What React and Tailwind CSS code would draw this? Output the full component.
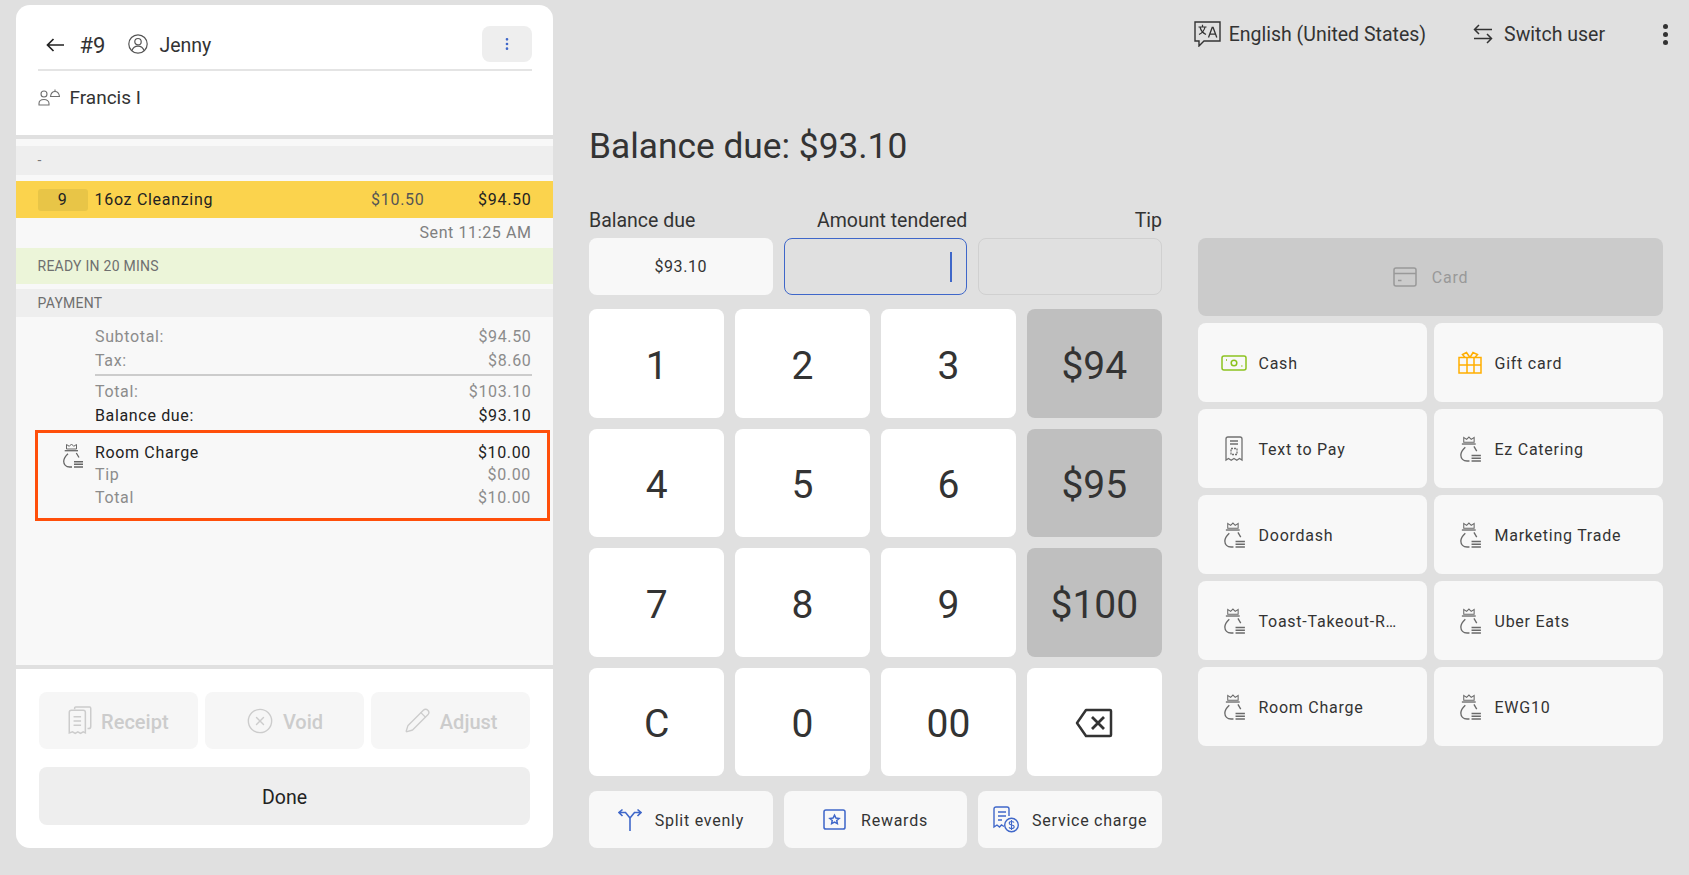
import { Pencil, CircleX, EllipsisVertical } from "lucide-react";

function BagIcon({ className = "" }) {
  return (
    <svg viewBox="0 0 20 25" className={className} fill="none" stroke="currentColor" strokeWidth="1.3">
      <path d="M3.500 6V1.500l2.800 1.800L8.500 1l2.200 2.300 2.800-1.800V6z" strokeWidth="1" />
      <path d="M1.700 7.700H15" />
      <path d="M13.300 10 16 14.500" />
      <path d="M5 10.700C2.500 13 .7 15.500.7 18.300.7 21.500 3 24 6.700 24H9" />
      <path d="M11 18.800h9M11 21.300h9M11 24h9" strokeWidth="1.400" />
    </svg>
  );
}

function CashIcon() {
  return (
    <svg viewBox="0 0 26 16" className="w-[26px] h-[16px] text-[#8cc21f]" fill="none" stroke="currentColor" strokeWidth="1.5">
      <rect x="1" y="1" width="24" height="14" rx="2" />
      <circle cx="13" cy="8" r="2.800" />
      <path d="M5 5h.8M20.500 11h.8" strokeWidth="1.800" />
    </svg>
  );
}

function GiftIcon() {
  return (
    <svg viewBox="0 0 24 23" className="w-[24px] h-[23px] text-[#ffae00]" fill="none" stroke="currentColor" strokeWidth="1.5">
      <rect x="1" y="6.500" width="22" height="15.500" />
      <path d="M1 14h22M9 6.500V22M16 6.500V22" />
      <path d="M12 6.500 8.500 1.500 4.500 3.500 7 6.500M12 6.500l3-5 4.500 2L17 6.500" />
    </svg>
  );
}

function TextPayIcon() {
  return (
    <svg viewBox="0 0 18 26" className="w-[18px] h-[26px] text-[#707070]" fill="none" stroke="currentColor" strokeWidth="1.300">
      <path d="M1 3a2 2 0 0 1 2-2h12a2 2 0 0 1 2 2v21l-2.500-1.500-2.700 1.800-2.800-1.800-2.800 1.800-2.700-1.800L1 24z" />
      <path d="M5 5h8M5 8h8" />
      <rect x="6" y="12.500" width="6" height="6" strokeDasharray="2 1" />
    </svg>
  );
}

function CardIcon() {
  return (
    <svg viewBox="0 0 24 20" className="w-[24px] h-[20px]" fill="none" stroke="currentColor" strokeWidth="1.500">
      <rect x="1" y="1" width="22" height="18" rx="2" />
      <path d="M1 6.500h22M5 13.500h3.500" />
    </svg>
  );
}

function SplitIcon() {
  return (
    <svg viewBox="0 0 24 24" className="w-[24px] h-[24px] text-[#3f67c9]" fill="none" stroke="currentColor" strokeWidth="1.600">
      <path d="M12 23V10" />
      <path d="M12 10 7.500 4.500H1M4.500 1.500 1 4.500l3.500 3.500M12 10l4.500-5.500H23M19.500 1.500 23 4.500 19.500 8" />
    </svg>
  );
}

function RewardsIcon() {
  return (
    <svg viewBox="0 0 24 22" className="w-[23px] h-[21px] text-[#3f67c9]" fill="none" stroke="currentColor" strokeWidth="1.600">
      <rect x="1" y="1" width="22" height="20" rx="2" />
      <path d="m12 6.500 1.500 3 3.300.4-2.400 2.200.6 3.300-3-1.600-3 1.600.6-3.300-2.400-2.200 3.300-.4z" />
    </svg>
  );
}

function ServiceIcon() {
  return (
    <svg viewBox="0 0 26 27" className="w-[26px] h-[27px] text-[#3f67c9]" fill="none" stroke="currentColor" strokeWidth="1.400">
      <path d="M11 20.500 8.500 19l-2 2L4 19l-3 2V3a2 2 0 0 1 2-2h11a2 2 0 0 1 2 2v7" />
      <path d="M5 6h8M5 10h8M5 14h4" />
      <circle cx="18.500" cy="19" r="6.800" />
      <path d="M21 16.500c-.6-.8-1.500-1-2.500-1-1.300 0-2.300.7-2.300 1.800 0 2.500 5 1 5 3.500 0 1.100-1.200 1.800-2.700 1.800-1 0-2-.4-2.500-1.200M18.500 14v10" strokeWidth="1.100" />
    </svg>
  );
}

function TranslateIcon() {
  return (
    <svg viewBox="0 0 27 26" className="w-[27px] h-[26px] text-[#333333]" fill="none" stroke="currentColor" strokeWidth="1.400">
      <path d="M1 1h25v19H10l-5 5v-5H1z" />
      <path d="M4.500 6h8M8.500 3.800V6M6 6c.8 3.500 3 6 6 7.500M11 6c-.6 3.500-3 6-6 7.500" strokeWidth="1.200" />
      <path d="m14.500 16.500 3.700-10h.9l3.700 10M16 13.200h5.500" strokeWidth="1.300" />
    </svg>
  );
}

function SwitchIcon() {
  return (
    <svg viewBox="0 0 20 20" className="w-[20px] h-[20px] text-[#333333]" fill="none" stroke="currentColor" strokeWidth="1.500">
      <path d="M19 5.500H1.500M6 1 1.500 5.500 6 10M1 14.500h17.500M14 10l4.500 4.500L14 19" />
    </svg>
  );
}

function ReceiptIcon() {
  return (
    <svg viewBox="0 0 22 27" className="w-[24px] h-[29px]" fill="none" stroke="currentColor" strokeWidth="1.400">
      <path d="M6 3V2a1 1 0 0 1 1-1h13a1 1 0 0 1 1 1v17a2 2 0 0 1-2 2h-1" />
      <path d="M1 6a2 2 0 0 1 2-2h11a2 2 0 0 1 2 2v19l-2-1-2.500 1.500L9 24l-2.500 1.500L4 24l-3 1z" />
      <path d="M5 10h7M5 14h7M5 18h7" />
    </svg>
  );
}

function GuestIcon() {
  return (
    <svg viewBox="0 0 22 17" className="w-[22px] h-[17px] text-[#707070]" fill="none" stroke="currentColor" strokeWidth="1.100">
      <circle cx="6" cy="5" r="3" />
      <path d="M1 16v-1.500C1 12 3 10.500 6 10.500s5 1.500 5 4V16z" />
      <path d="M12.500 7.500C13 4 15 2.500 17 2.500s4 1.500 4.500 5zM17 .6v1.500" />
    </svg>
  );
}

function UserCircleIcon() {
  return (
    <svg viewBox="0 0 20 20" className="w-[20px] h-[20px] text-[#555555]" fill="none" stroke="currentColor" strokeWidth="1.200">
      <circle cx="10" cy="10" r="9.200" />
      <circle cx="10" cy="7.700" r="3.200" />
      <path d="M4 16.500c1-3 3.200-4.300 6-4.300s5 1.300 6 4.300" />
    </svg>
  );
}

function BackspaceIcon() {
  return (
    <svg viewBox="0 0 38 30" className="w-[38px] h-[30px] text-[#333333]" fill="none" stroke="currentColor" strokeWidth="2.500" strokeLinejoin="round">
      <path d="M11 2h24a1 1 0 0 1 1 1v24a1 1 0 0 1-1 1H11L2 15z" />
      <path d="m17 9 12 12M29 9 17 21" strokeWidth="2.800" />
    </svg>
  );
}

const keys = ["1", "2", "3", "$94", "4", "5", "6", "$95", "7", "8", "9", "$100", "C", "0", "00"];

const methods = [
  { name: "Cash", icon: <CashIcon /> },
  { name: "Gift card", icon: <GiftIcon /> },
  { name: "Text to Pay", icon: <TextPayIcon /> },
  { name: "Ez Catering" },
  { name: "Doordash" },
  { name: "Marketing Trade" },
  { name: "Toast-Takeout-R…" },
  { name: "Uber Eats" },
  { name: "Room Charge" },
  { name: "EWG10" },
];

function SummaryRow({ label, value, strong }) {
  return (
    <div className={`flex justify-between h-[24px] items-center text-[16px] tracking-[0.65px] ${strong ? "text-[#222222]" : "text-[#8c8c8c]"}`}>
      <span>{label}</span>
      <span>{value}</span>
    </div>
  );
}

function GhostButton({ icon, label }) {
  return (
    <div className="flex-1 h-[57px] rounded-lg bg-[#f6f6f6] text-[#cccccc] flex items-center justify-center gap-[9px] text-[20px] font-medium">
      {icon}
      <span className="pt-[2px]">{label}</span>
    </div>
  );
}

export default function App() {
  return (
    <div className="flex w-[1689px] h-[875px] bg-[#e0e0e0] overflow-hidden text-[#333333]" style={{ fontFamily: "Roboto, sans-serif" }}>
      {/* left ticket panel */}
      <div className="ml-[16px] mt-[5px] w-[537px] h-[843px] bg-white rounded-[14px] overflow-hidden flex flex-col shrink-0">
        <div className="h-[130px] px-[21.5px] pt-[21px] shrink-0">
          <div className="h-[43px] border-b-2 border-[#e4e4e4] box-content flex items-start">
            <div className="flex-1 flex items-center h-[36px] pl-[8px]">
              <svg viewBox="0 0 18 14" className="w-[18px] h-[14px] mt-[1px] text-[#222222]" fill="none" stroke="currentColor" strokeWidth="1.700">
                <path d="M18 7H1.500M7.500 1 1.500 7l6 6" />
              </svg>
              <span className="ml-[16px] pt-[3px] text-[22px] leading-none">#9</span>
              <span className="ml-[23px]"><UserCircleIcon /></span>
              <span className="ml-[11px] pt-[3px] text-[19.500px] leading-none">Jenny</span>
            </div>
            <div className="w-[50px] h-[36px] rounded-lg bg-[#eeeeee] flex items-center justify-center text-[#3f67c9]">
              <EllipsisVertical size={16} strokeWidth={2} />
            </div>
          </div>
          <div className="flex items-center mt-[16px] h-[20px] gap-[10px]">
            <GuestIcon />
            <span className="text-[19px] pt-[2px]">Francis I</span>
          </div>
        </div>

        <div className="flex-1 flex flex-col bg-[#f8f8f8] border-y-4 border-[#e0e0e0] pt-[7px]">
          <div className="h-[29px] bg-[#eeeeee] px-[21.5px] flex items-center text-[14px] text-[#777777]">-</div>
          <div className="mt-[6px] h-[37px] bg-[#fbd34d] px-[21.5px] flex items-center pt-[1px] text-[16px] tracking-[0.7px] text-[#222222]">
            <span className="w-[50px] h-[22px] bg-[#e8c547] rounded-[3px] flex items-center justify-center">9</span>
            <span className="ml-[7px] flex-1">16oz Cleanzing</span>
            <span className="text-[#555555]">$10.50</span>
            <span className="w-[107px] text-right">$94.50</span>
          </div>
          <div className="h-[30px] px-[21.5px] flex items-center justify-end text-[16px] tracking-[0.6px] text-[#808080]">Sent 11:25 AM</div>
          <div className="h-[36px] bg-[#ecf5d9] px-[21.5px] flex items-center text-[14px] tracking-[0.25px] text-[#6f6f6f]">READY IN 20 MINS</div>
          <div className="mt-[5px] h-[28px] bg-[#eeeeee] px-[21.5px] flex items-center text-[14px] tracking-[0.25px] text-[#6f6f6f]">PAYMENT</div>

          <div className="mt-[8px] pl-[79px] pr-[21.5px]">
            <SummaryRow label="Subtotal:" value="$94.50" />
            <SummaryRow label="Tax:" value="$8.60" />
            <div className="h-[2px] bg-[#cccccc] mt-[1px] mb-[4px]" />
            <SummaryRow label="Total:" value="$103.10" />
            <SummaryRow label="Balance due:" value="$93.10" strong />
          </div>

          <div className="mt-[2px] ml-[19px] mr-[3px] h-[91px] border-[3.500px] border-[#ff4f0a] flex pl-[25px] pr-[16px] pt-[8.500px]">
            <BagIcon className="w-[20px] h-[25px] mt-[1px] text-[#666666] shrink-0" />
            <div className="ml-[12px] flex-1 text-[16px] tracking-[0.65px] leading-[22.700px]">
              <div className="flex justify-between text-[#222222]"><span>Room Charge</span><span>$10.00</span></div>
              <div className="flex justify-between text-[#8c8c8c]"><span>Tip</span><span>$0.00</span></div>
              <div className="flex justify-between text-[#8c8c8c]"><span>Total</span><span>$10.00</span></div>
            </div>
          </div>
        </div>

        <div className="h-[179px] px-[23px] pt-[23px] shrink-0">
          <div className="flex gap-[7.500px]">
            <GhostButton icon={<ReceiptIcon />} label="Receipt" />
            <GhostButton icon={<CircleX size={28} strokeWidth={1.200} />} label="Void" />
            <GhostButton icon={<Pencil size={27} strokeWidth={1.200} />} label="Adjust" />
          </div>
          <div className="mt-[18px] h-[58px] rounded-lg bg-[#eeeeee] flex items-center justify-center pt-[4px] text-[19.500px] text-[#222222]">Done</div>
        </div>
      </div>

      <div className="flex-1 flex flex-col">
        {/* top bar */}
        <div className="h-[68px] flex items-center justify-end text-[19.500px] pr-[21px]">
          <TranslateIcon />
          <span className="ml-[8px] pt-[2px]">English (United States)</span>
          <span className="ml-[47px]"><SwitchIcon /></span>
          <span className="ml-[11px] pt-[2px]">Switch user</span>
          <span className="ml-[57px] flex flex-col gap-[3px] px-[0.5px]">
            <i className="block w-[5px] h-[5px] rounded-full bg-[#333333]" />
            <i className="block w-[5px] h-[5px] rounded-full bg-[#333333]" />
            <i className="block w-[5px] h-[5px] rounded-full bg-[#333333]" />
          </span>
        </div>

        <div className="ml-[36px] mt-[47px] h-[60px] flex items-center pt-[3px] text-[35.300px] font-[450] leading-none">Balance due: $93.10</div>

        <div className="flex mt-[33px] ml-[36px]">
          {/* amount + keypad */}
          <div className="w-[573px]">
            <div className="grid grid-cols-3 gap-x-[11px] h-[24px] text-[19.500px] items-center -mt-[2px]">
              <span className="whitespace-nowrap">Balance due</span>
              <span className="text-right whitespace-nowrap">Amount tendered</span>
              <span className="text-right">Tip</span>
            </div>
            <div className="grid grid-cols-3 gap-x-[11px] mt-[8px] h-[57px]">
              <div className="rounded-lg bg-[#f8f8f8] flex items-center justify-center pt-[1px] text-[16px] tracking-[0.6px]">$93.10</div>
              <div className="rounded-lg border border-[#3f67c9] flex items-center justify-end pr-[14px]">
                <span className="w-[2px] h-[30px] bg-[#3f67c9]" />
              </div>
              <div className="rounded-lg border border-[#d0d0d0]" />
            </div>
            <div className="grid grid-cols-4 gap-x-[10.500px] gap-y-[11px] mt-[14px]">
              {keys.map((k) => (
                <div
                  key={k}
                  className={`h-[108.500px] rounded-lg flex items-center justify-center pt-[5px] text-[39px] ${k[0] === "$" ? "bg-[#bfbfbf]" : "bg-white"}`}
                >
                  {k}
                </div>
              ))}
              <div className="h-[108.500px] rounded-lg bg-white flex items-center justify-center pt-[2px]">
                <BackspaceIcon />
              </div>
            </div>
            <div className="grid grid-cols-3 gap-x-[11px] mt-[15px] text-[16px] tracking-[0.75px]">
              <div className="h-[57px] rounded-lg bg-[#f8f8f8] flex items-center justify-center gap-[13px]"><SplitIcon /><span className="pt-[2px]">Split evenly</span></div>
              <div className="h-[57px] rounded-lg bg-[#f8f8f8] flex items-center justify-center gap-[15px]"><RewardsIcon /><span className="pt-[2px]">Rewards</span></div>
              <div className="h-[57px] rounded-lg bg-[#f8f8f8] flex items-center justify-center gap-[13px]"><ServiceIcon /><span className="pt-[2px]">Service charge</span></div>
            </div>
          </div>

          {/* payment methods */}
          <div className="ml-[36px] w-[465px] pt-[30px]">
            <div className="h-[78px] rounded-lg bg-[#cbcbcb] flex items-center justify-center gap-[15px] text-[16px] tracking-[0.75px] text-[#999999]">
              <CardIcon />
              <span className="pt-[2px]">Card</span>
            </div>
            <div className="grid grid-cols-2 gap-[7px] mt-[7px]">
              {methods.map((m) => (
                <div key={m.name} className="h-[79px] rounded-lg bg-[#f8f8f8] flex items-center pl-[22px] pr-[16px] text-[16px] tracking-[0.75px] text-[#333333]">
                  <span className="w-[28px] flex justify-center shrink-0">
                    {m.icon || <BagIcon className="w-[21px] h-[26px] text-[#6a6a6a]" />}
                  </span>
                  <span className="ml-[10.500px] pt-[2px] whitespace-nowrap">{m.name}</span>
                </div>
              ))}
            </div>
          </div>
        </div>
      </div>
    </div>
  );
}
